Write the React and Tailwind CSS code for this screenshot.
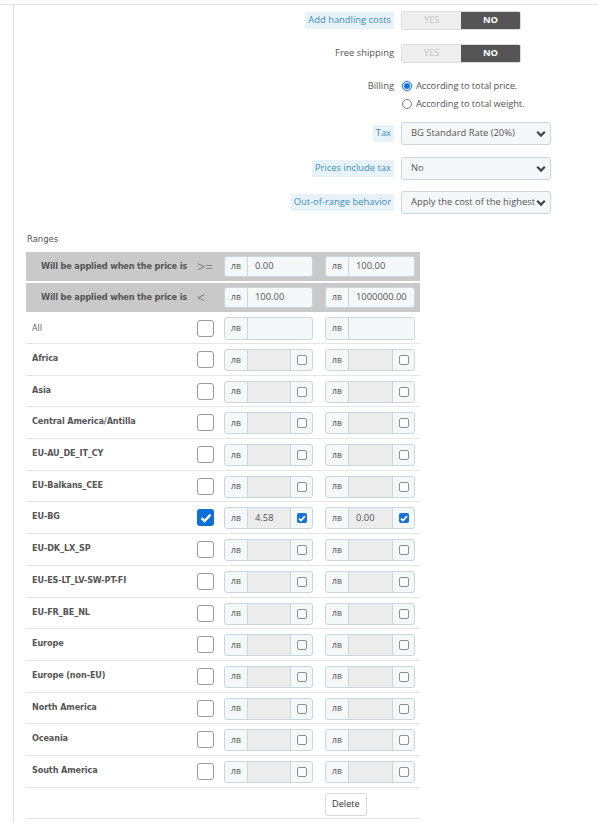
import { useState } from 'react';

const regions = [
  { name: 'Africa' },
  { name: 'Asia' },
  { name: 'Central America/Antilla' },
  { name: 'EU-AU_DE_IT_CY' },
  { name: 'EU-Balkans_CEE' },
  { name: 'EU-BG', checked: true, a: '4.58', b: '0.00' },
  { name: 'EU-DK_LX_SP' },
  { name: 'EU-ES-LT_LV-SW-PT-FI' },
  { name: 'EU-FR_BE_NL' },
  { name: 'Europe' },
  { name: 'Europe (non-EU)' },
  { name: 'North America' },
  { name: 'Oceania' },
  { name: 'South America' },
];

const cond = "font-['Ubuntu_Condensed','Liberation_Sans_Narrow','DejaVu_Sans_Condensed','Roboto_Condensed',Roboto,sans-serif]";

const Toggle = () => (
  <div className="flex h-[19px] w-[120px] rounded-[2px] overflow-hidden border border-[#dcdcdc]">
    <div className="flex-1 flex items-center justify-center bg-[#eeeeee] text-[#c4c4c4]">YES</div>
    <div className="flex-1 flex items-center justify-center bg-[#555555] text-white font-bold">NO</div>
  </div>
);

const Tip = ({ children }) => (
  <span className="bg-[#e7f3f9] text-[#3f8cbc] px-[3px] py-[1px] whitespace-nowrap">{children}</span>
);

const Chevron = () => (
  <svg width="10" height="8" viewBox="0 0 10 8" className="shrink-0">
    <path d="M1.2 1.8 L5 5.6 L8.8 1.8" fill="none" stroke="#444" strokeWidth="2.2" />
  </svg>
);

const Select = ({ value }) => (
  <div className="flex items-center h-[23px] w-[150px] rounded-[3px] border border-[#c9d7dc] bg-[#f5f8f9] pl-[9px] pr-[4px] text-[#555]">
    <span className="flex-1 whitespace-nowrap">{value}</span>
    <Chevron />
  </div>
);

const Row = ({ label, children, className = '' }) => (
  <div className={`flex items-center ${className}`}>
    <div className="w-[380px] flex justify-end">{label}</div>
    <div className="ml-[7px]">{children}</div>
  </div>
);

const BigCheck = ({ checked }) =>
  checked ? (
    <div className="w-[17px] h-[17px] rounded-[3px] bg-[#0f6fd6] flex items-center justify-center">
      <svg width="12" height="10" viewBox="0 0 12 10">
        <path d="M1.5 5.2 L4.6 8 L10.5 1.6" fill="none" stroke="white" strokeWidth="2.4" />
      </svg>
    </div>
  ) : (
    <div className="w-[17px] h-[17px] rounded-[3px] border border-[#9a9a9a] bg-white" />
  );

const SmallCheck = ({ checked }) =>
  checked ? (
    <div className="w-[10px] h-[10px] rounded-[2px] bg-[#1672d4] flex items-center justify-center">
      <svg width="8" height="7" viewBox="0 0 8 7">
        <path d="M1 3.6 L3 5.5 L7 1.2" fill="none" stroke="white" strokeWidth="1.7" />
      </svg>
    </div>
  ) : (
    <div className="w-[10px] h-[10px] rounded-[2px] border border-[#8f8f8f] bg-white" />
  );

const Group = ({ value, width, disabled, addon, checked, height = 'h-[22px]' }) => (
  <div className={`flex ${height} ${width} rounded-[3px] border border-[#c9d7dc] bg-[#f5f8f9] overflow-hidden`}>
    <div className="w-[23px] shrink-0 flex items-center justify-center border-r border-[#c9d7dc] text-[8.6px] text-[#555]">лв</div>
    <div className={`flex-1 flex items-center pl-[7px] text-[#555] ${disabled ? 'bg-[#ececec]' : ''}`}>{value}</div>
    {addon && (
      <div className="w-[22px] shrink-0 flex items-center justify-center border-l border-[#c9d7dc]">
        <SmallCheck checked={checked} />
      </div>
    )}
  </div>
);

export default function App() {
  const [billing, setBilling] = useState('price');

  return (
    <div className="min-h-screen bg-white font-['Open_Sans',sans-serif] text-[9.4px] text-[#555]">
      <div className="pt-[4px]">
        <div className="border-t border-[#e2e2e2]">
          <div className="ml-[13px] border-l border-[#e2e2e2] min-h-[818px]">
            <Row label={<Tip>Add handling costs</Tip>} className="pt-[6px]">
              <Toggle />
            </Row>
            <Row label={<span className="text-[#555]">Free shipping</span>} className="mt-[14px]">
              <Toggle />
            </Row>

            <div className="flex mt-[14px]">
              <div className="w-[380px] flex justify-end h-[18px] items-center">Billing</div>
              <div className="ml-[8px] flex flex-col">
                {[
                  ['price', 'According to total price.'],
                  ['weight', 'According to total weight.'],
                ].map(([k, t]) => (
                  <label key={k} className="flex items-center h-[18px] cursor-pointer" onClick={() => setBilling(k)}>
                    {billing === k ? (
                      <span className="w-[10px] h-[10px] rounded-full border border-[#1a73e8] flex items-center justify-center shadow-[0_0_0_1px_#d6e6fb]">
                        <span className="w-[6px] h-[6px] rounded-full bg-[#1a73e8]" />
                      </span>
                    ) : (
                      <span className="w-[10px] h-[10px] rounded-full border border-[#7a7a7a] bg-white" />
                    )}
                    <span className="ml-[4px] tracking-[-0.1px]">{t}</span>
                  </label>
                ))}
              </div>
            </div>

            <Row label={<Tip>Tax</Tip>} className="mt-[9px]">
              <Select value="BG Standard Rate (20%)" />
            </Row>
            <Row label={<Tip>Prices include tax</Tip>} className="mt-[12px]">
              <Select value="No" />
            </Row>
            <Row label={<Tip>Out-of-range behavior</Tip>} className="mt-[11px]">
              <Select value="Apply the cost of the highest" />
            </Row>

            <div className={`ml-[13px] mt-[18px] h-[13px] leading-[13px] text-[9.4px] text-[#555] ${cond}`}>Ranges</div>

            <div className="ml-[12px] mt-[7px] w-[394px]">
              {[
                ['>=', '0.00', '100.00'],
                ['<', '100.00', '1000000.00'],
              ].map(([op, a, b], i) => (
                <div key={op} className={`flex items-center h-[29px] bg-[#c9c9c9] ${i ? 'mt-[2px]' : ''}`}>
                  <div className={`w-[171px] pl-[15px] whitespace-nowrap font-bold text-[9.1px] tracking-[-0.15px] text-[#555] ${cond}`}>Will be applied when the price is</div>
                  <div className="w-[27px] text-[14px] font-light text-[#555] leading-none">{op}</div>
                  <Group value={a} width="w-[89px]" height="h-[21px]" />
                  <div className="ml-[12px]">
                    <Group value={b} width="w-[90px]" height="h-[21px]" />
                  </div>
                </div>
              ))}

              <div className="flex items-start h-[32px] border-b border-[#e6e6e6]">
                <div className={`w-[171px] pl-[6px] pt-[10px] text-[9px] text-[#666] ${cond}`}>All</div>
                <div className="w-[27px] pt-[8px]"><BigCheck /></div>
                <div className="pt-[5px]"><Group value="" width="w-[89px]" height="h-[23px]" /></div>
                <div className="pt-[5px] ml-[12px]"><Group value="" width="w-[90px]" height="h-[23px]" /></div>
              </div>

              {regions.map((r) => (
                <div key={r.name} className="flex items-start h-[31.7px] border-b border-[#e6e6e6]">
                  <div className={`w-[171px] pl-[6px] pt-[8px] whitespace-nowrap font-bold text-[9px] tracking-[-0.1px] text-[#555] ${cond}`}>{r.name}</div>
                  <div className="w-[27px] pt-[7px]"><BigCheck checked={r.checked} /></div>
                  <div className="pt-[5px]">
                    <Group value={r.a || ''} width="w-[89px]" disabled addon checked={r.checked} />
                  </div>
                  <div className="pt-[5px] ml-[12px]">
                    <Group value={r.b || ''} width="w-[90px]" disabled addon checked={r.checked} />
                  </div>
                </div>
              ))}

              <div className="flex h-[31px] border-b border-[#e6e6e6] pt-[5px]">
                <div className="ml-[299px]">
                  <button className="h-[23px] px-[6px] rounded-[3px] border border-[#d9d9d9] bg-white text-[9.2px] text-[#333]">Delete</button>
                </div>
              </div>
            </div>
          </div>
        </div>
      </div>
    </div>
  );
}
